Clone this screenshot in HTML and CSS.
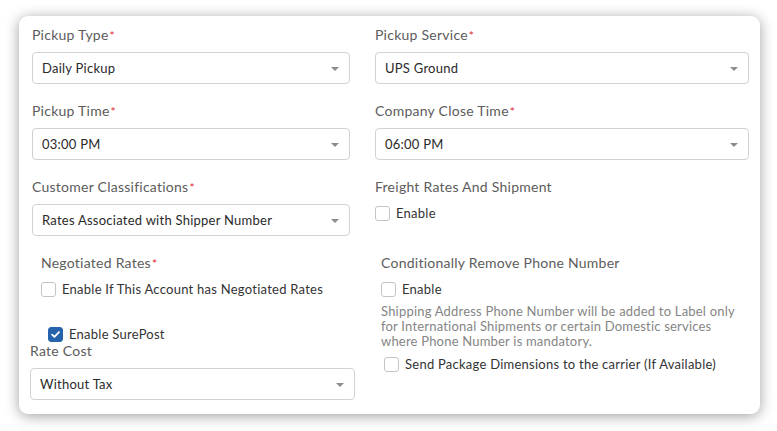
FILE: index.html
```html
<!DOCTYPE html>
<html>
<head>
<meta charset="utf-8">
<link rel="stylesheet" href="styles.css">
</head>
<body>
<div class="card">
  <div class="grid">
    <div class="field">
      <div class="label">Pickup Type<span class="req">*</span></div>
      <div class="select"><span>Daily Pickup</span><i class="arrow"></i></div>
    </div>
    <div class="field">
      <div class="label">Pickup Service<span class="req">*</span></div>
      <div class="select"><span>UPS Ground</span><i class="arrow"></i></div>
    </div>
    <div class="field">
      <div class="label">Pickup Time<span class="req">*</span></div>
      <div class="select"><span>03:00 PM</span><i class="arrow"></i></div>
    </div>
    <div class="field">
      <div class="label">Company Close Time<span class="req">*</span></div>
      <div class="select"><span>06:00 PM</span><i class="arrow"></i></div>
    </div>
    <div class="field">
      <div class="label">Customer Classifications<span class="req">*</span></div>
      <div class="select"><span>Rates Associated with Shipper Number</span><i class="arrow"></i></div>
    </div>
    <div class="field">
      <div class="label">Freight Rates And Shipment</div>
      <div class="check"><i class="box"></i><span>Enable</span></div>
    </div>
    <div class="stack-left">
      <div class="neg">
        <div class="label">Negotiated Rates<span class="req">*</span></div>
        <div class="check"><i class="box"></i><span>Enable If This Account has Negotiated Rates</span></div>
      </div>
      <div class="check surepost"><i class="box checked"><svg viewBox="0 0 16 16" width="15" height="15"><path d="M3.8 8.2 L6.7 11 L12.3 5" fill="none" stroke="#fff" stroke-width="2.2" stroke-linecap="round" stroke-linejoin="round"/></svg></i><span>Enable SurePost</span></div>
      <div class="rate">
        <div class="label">Rate Cost</div>
        <div class="select"><span>Without Tax</span><i class="arrow"></i></div>
      </div>
    </div>
    <div class="stack-right">
      <div class="label">Conditionally Remove Phone Number</div>
      <div class="check"><i class="box"></i><span>Enable</span></div>
      <p class="help">Shipping Address Phone Number will be added to Label only for International Shipments or certain Domestic services where Phone Number is mandatory.</p>
      <div class="check send"><i class="box"></i><span>Send Package Dimensions to the carrier (If Available)</span></div>
    </div>
  </div>
</div>
</body>
</html>
```
FILE: styles.css
```css
html, body {
  margin: 0;
  padding: 0;
  background: #ffffff;
}
body {
  font-family: Lato, "Open Sans", "Liberation Sans", sans-serif;
  letter-spacing: 0.25px;
  width: 777px;
  height: 431px;
  overflow: hidden;
}
.card {
  margin: 16px 0 0 19px;
  width: 741px;
  height: 398px;
  box-sizing: border-box;
  background: #fff;
  border-radius: 9px;
  box-shadow: 0 2px 14px rgba(0, 0, 0, 0.38);
  padding: 10px 0 0 13px;
}
.grid {
  display: grid;
  grid-template-columns: 318px 374px;
  column-gap: 25px;
  align-items: start;
}
.field {
  margin-bottom: 18px;
}
.label {
  font-size: 14px;
  line-height: 17px;
  height: 17px;
  color: #5c5c5c;
  margin-bottom: 9px;
  white-space: nowrap;
}
.req {
  color: #e0262b;
  font-size: 12px;
  line-height: 0;
  margin-left: 1px;
}
.select {
  height: 32px;
  box-sizing: border-box;
  border: 1px solid #d2d2d2;
  border-radius: 4px;
  display: flex;
  align-items: center;
  justify-content: space-between;
  padding: 0 10px 0 9px;
  font-size: 13px;
  color: #2a2a2a;
}
.arrow {
  width: 0;
  height: 0;
  border-left: 4.5px solid transparent;
  border-right: 4.5px solid transparent;
  border-top: 4.5px solid #8c8c8c;
  margin-top: 1px;
}
.check {
  display: flex;
  align-items: center;
  height: 17px;
  font-size: 13px;
  color: #333;
  white-space: nowrap;
}
.check span {
  margin-top: -1px;
}
.field .label + .check {
  margin-top: 10px;
}
.box {
  width: 15px;
  height: 15px;
  box-sizing: border-box;
  border: 1px solid #c4c4c4;
  border-radius: 3px;
  margin-right: 6px;
  flex: none;
  display: flex;
  align-items: center;
  justify-content: center;
  background: #fff;
}
.box.checked {
  background: #2563ad;
  border-color: #2563ad;
}
.box svg {
  display: block;
}
.stack-left .neg {
  padding-left: 9px;
}
.stack-left .neg .label {
  margin-bottom: 10px;
}
.surepost {
  margin-top: 28px;
  padding-left: 16px;
}
.rate {
  margin-left: -2px;
  width: 325px;
}
.rate .label {
  margin-top: -1px;
}
.stack-right {
  padding-left: 6px;
}
.stack-right .label {
  margin-bottom: 10px;
}
.help {
  margin: 6px 0 0 0;
  font-size: 13px;
  line-height: 14.75px;
  letter-spacing: 0.2px;
  color: #858585;
}
.send {
  margin-top: 8px;
  padding-left: 3px;
}
```
